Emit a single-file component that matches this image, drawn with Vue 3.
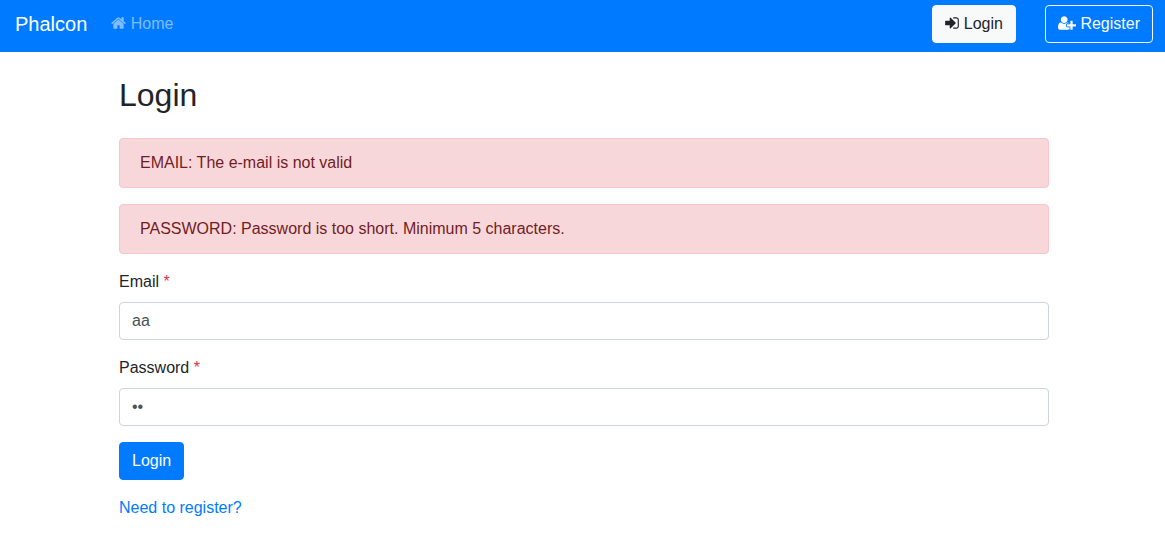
<script setup>
import { ref } from 'vue'

const email = ref('aa')
const password = ref('aa')
const errors = [
  'EMAIL: The e-mail is not valid',
  'PASSWORD: Password is too short. Minimum 5 characters.'
]
</script>

<template>
  <div class="page">
    <nav class="navbar">
      <a class="brand" href="#">Phalcon</a>
      <a class="nav-link" href="#"><svg class="icon icon-home" viewBox="64 0 1664 1792" aria-hidden="true"><path d="M1472 992v480q0 26-19 45t-45 19h-384v-384h-256v384h-384q-26 0-45-19t-19-45v-480q0-1 .5-3t.5-3l575-474 575 474q1 2 1 6zm223-69l-62 74q-8 9-21 11h-3q-13 0-21-7l-692-577-692 577q-12 8-24 7-13-2-21-11l-62-74q-8-10-7-23.5t11-21.5l719-599q32-26 76-26t76 26l244 204v-195q0-14 9-23t23-9h192q14 0 23 9t9 23v408l219 182q10 8 11 21.5t-7 23.5z" /></svg> Home</a>
      <div class="actions">
        <a class="btn btn-light" href="#"><svg class="icon icon-login" viewBox="128 0 1536 1792" aria-hidden="true"><path d="M1312 896q0 26-19 45l-544 544q-19 19-45 19t-45-19-19-45v-288h-448q-26 0-45-19t-19-45v-384q0-26 19-45t45-19h448v-288q0-26 19-45t45-19 45 19l544 544q19 19 19 45zm352-352v704q0 119-84.5 203.5t-203.5 84.5h-320q-13 0-22.5-9.5t-9.5-22.5q0-4-1-20t-.5-26.5 3-23.5 10-19.5 20.5-6.5h320q66 0 113-47t47-113v-704q0-66-47-113t-113-47h-312l-11.5-1-11.5-3-8-5.5-7-9-2-13.5q0-4-1-20t-.5-26.5 3-23.5 10-19.5 20.5-6.5h320q119 0 203.5 84.5t84.5 203.5z" /></svg> Login</a>
        <a class="btn btn-outline" href="#"><svg class="icon icon-register" viewBox="0 0 2048 1792" aria-hidden="true"><path d="M704 896q-159 0-271.5-112.5t-112.5-271.5 112.5-271.5 271.5-112.5 271.5 112.5 112.5 271.5-112.5 271.5-271.5 112.5zm960 128h352q13 0 22.5 9.5t9.5 22.5v192q0 13-9.5 22.5t-22.5 9.5h-352v352q0 13-9.5 22.5t-22.5 9.5h-192q-13 0-22.5-9.5t-9.5-22.5v-352h-352q-13 0-22.5-9.5t-9.5-22.5v-192q0-13 9.5-22.5t22.5-9.5h352v-352q0-13 9.5-22.5t22.5-9.5h192q13 0 22.5 9.5t9.5 22.5v352zm-736 224q0 52 38 90t90 38h256v238q-68 50-171 50h-874q-121 0-194-69t-73-190q0-53 3.5-103.5t14-109 26.5-108.5 43-97.5 62-81 85.5-53.5 111.5-20q19 0 39 17 79 61 154.5 91.5t164.5 30.5 164.5-30.5 154.5-91.5q20-17 39-17 132 0 217 96h-223q-52 0-90 38t-38 90v192z" /></svg> Register</a>
      </div>
    </nav>

    <main class="main">
      <div class="container">
        <h1 class="title">Login</h1>
        <div v-for="error in errors" :key="error" class="alert" role="alert">{{ error }}</div>
        <form @submit.prevent>
          <div class="field">
            <label for="email">Email <span class="required">*</span></label>
            <input id="email" v-model="email" type="text" autocomplete="off">
          </div>
          <div class="field">
            <label for="password">Password <span class="required">*</span></label>
            <input id="password" v-model="password" type="password" autocomplete="off">
          </div>
          <button class="btn btn-primary" type="submit">Login</button>
        </form>
        <a class="register-link" href="#">Need to register?</a>
      </div>
    </main>
  </div>
</template>

<style>
body {
  margin: 0;
  background: #fff;
}
</style>

<style scoped>
.page,
.page * {
  box-sizing: border-box;
}

.page {
  font-family: "Liberation Sans", Arial, sans-serif;
  font-size: 16px;
  line-height: 24px;
  color: #212529;
}

a {
  text-decoration: none;
}

.navbar {
  display: flex;
  align-items: center;
  padding: 5px 12px 9px 15px;
  background: #007bff;
}

.brand {
  margin-right: 16px;
  font-size: 20px;
  color: #fff;
}

.nav-link {
  padding: 0 8px;
  color: rgba(255, 255, 255, 0.5);
}

.actions {
  display: flex;
  gap: 29px;
  margin-left: auto;
}

.icon {
  height: 16px;
  vertical-align: -2px;
  fill: currentColor;
}

.icon-home {
  width: 15px;
}

.icon-login {
  width: 14px;
}

.icon-register {
  width: 18px;
}

.btn {
  display: inline-block;
  padding: 6px 12px;
  border: 1px solid transparent;
  border-radius: 4px;
  font: inherit;
  white-space: nowrap;
  cursor: pointer;
}

.btn-light {
  background: #f8f9fa;
  border-color: #f8f9fa;
  color: #212529;
}

.btn-outline {
  border-color: #f8f9fa;
  color: #f8f9fa;
}

.btn-primary {
  display: block;
  background: #007bff;
  border-color: #007bff;
  color: #fff;
}

.main {
  padding: 24px 12px 24px 15px;
}

.container {
  max-width: 930px;
  margin: 0 auto;
}

.title {
  margin: 0 0 24px;
  font-size: 32px;
  font-weight: 400;
  line-height: 38px;
}

.alert {
  margin-bottom: 16px;
  padding: 12px 20px;
  border: 1px solid #f5c6cb;
  border-radius: 4px;
  background: #f8d7da;
  color: #721c24;
}

.field {
  margin-bottom: 16px;
}

.field label {
  display: block;
  margin-bottom: 8px;
}

.required {
  color: #dc3545;
}

.field input {
  display: block;
  width: 100%;
  height: 38px;
  padding: 6px 12px;
  border: 1px solid #ced4da;
  border-radius: 4px;
  background: #fff;
  font: inherit;
  color: #495057;
}

.register-link {
  display: inline-block;
  margin-top: 16px;
  color: #007bff;
}
</style>
